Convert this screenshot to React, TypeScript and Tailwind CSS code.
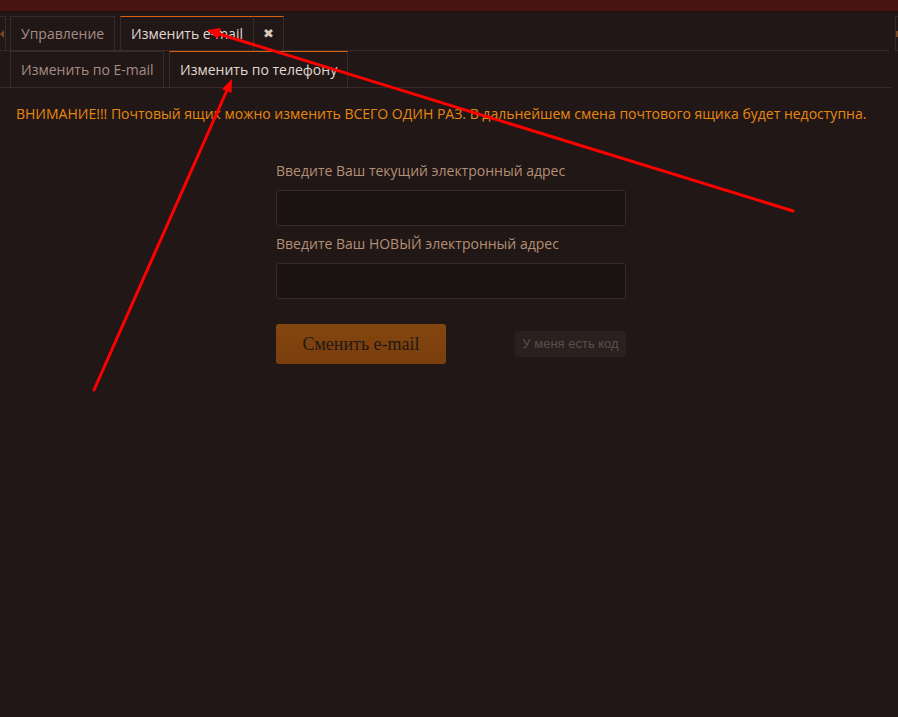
import React from 'react';

const FONT = "font-['Open_Sans','Liberation_Sans',sans-serif]";

function Tab({ label, active, className = '' }: { label: string; active?: boolean; className?: string }) {
  return (
    <div
      className={`flex items-center whitespace-nowrap px-[10px] border border-b-0 border-[#3a2b28] text-[14px] ${
        active ? 'border-t-[#d8600f] text-[#e2d8d2] font-medium' : 'text-[#a68d84]'
      } ${className}`}
    >
      {label}
    </div>
  );
}

function Field({ label }: { label: string }) {
  return (
    <div className="flex flex-col">
      <label className="text-[14px] leading-[20px] text-[#b58f75]">{label}</label>
      <input
        type="text"
        className="mt-[9px] h-[36px] w-[350px] rounded-[3px] border border-[#362927] bg-[#1b1312] px-2 text-[#d8c8b8] outline-none"
      />
    </div>
  );
}

export default function App() {
  return (
    <div className={`relative h-[717px] w-full overflow-hidden bg-[#201716] ${FONT}`}>
      {/* top strip */}
      <div className="h-[12px] border-b border-[#2c0d0b] bg-[#4a1411]" />

      {/* main tabs */}
      <div className="mt-[4px] flex h-[35px] items-stretch">
        <div className="mr-[6px] flex flex-1 items-stretch border-b border-[#3a2b28]">
          <div className="flex w-[6px] items-center border border-l-0 border-b-0 border-[#3a2b28]">
            <span className="h-0 w-0 border-y-[4px] border-r-[4px] border-y-transparent border-r-[#7b4a24]" />
          </div>
          <Tab label="Управление" className="ml-[4px] w-[105px]" />
          <div className="ml-[5px] flex items-stretch">
            <Tab label="Изменить e-mail" active className="w-[134px]" />
            <div className="flex w-[30px] items-center justify-center border border-l-0 border-b-0 border-[#3a2b28] border-t-[#d8600f] text-[13px] text-[#d9c9bb]">
              ✖
            </div>
          </div>
        </div>
        <div className="flex w-[3px] items-center border border-r-0 border-[#3a2b28]">
          <span className="h-[6px] w-[2px] bg-[#7b4a24]" />
        </div>
      </div>

      {/* sub tabs */}
      <div className="mr-[6px] flex h-[37px] items-stretch border-b border-[#3a2b28]">
        <Tab label="Изменить по E-mail" className="ml-[10px] w-[154px]" />
        <Tab label="Изменить по телефону" active className="ml-[5px] w-[179px]" />
      </div>

      <p className="mt-[16px] pl-[16px] text-[14px] leading-[20px] text-[#e8870f]">
        ВНИМАНИЕ!!! Почтовый ящик можно изменить ВСЕГО ОДИН РАЗ. В дальнейшем смена почтового ящика будет недоступна.
      </p>

      <div className="ml-[276px] mt-[37px] flex w-[350px] flex-col">
        <Field label="Введите Ваш текущий электронный адрес" />
        <div className="mt-[8px]">
          <Field label="Введите Ваш НОВЫЙ электронный адрес" />
        </div>
        <div className="mt-[25px] flex items-center justify-between">
          <button className="h-[40px] w-[170px] rounded-[3px] bg-gradient-to-b from-[#83460f] to-[#7a3e0d] font-['Liberation_Serif',serif] text-[18px] text-[#231814]">
            Сменить e-mail
          </button>
          <button className="h-[26px] w-[111px] rounded-[2px] bg-[#2a201f] font-['Liberation_Sans',sans-serif] text-[13px] text-[#5f4e48]">
            У меня есть код
          </button>
        </div>
      </div>

      {/* red arrows on top */}
      <svg className="pointer-events-none absolute left-0 top-0" width="898" height="717">
        <g stroke="#ff0000" strokeWidth="3" strokeLinecap="round" fill="#ff0000">
          <line x1="216" y1="33" x2="793" y2="211" />
          <polygon points="207,30 218,39 221,28" stroke="none" />
          <line x1="228" y1="88" x2="94" y2="390" />
          <polygon points="232,79 231.5,93 222,89" stroke="none" />
        </g>
      </svg>
    </div>
  );
}
